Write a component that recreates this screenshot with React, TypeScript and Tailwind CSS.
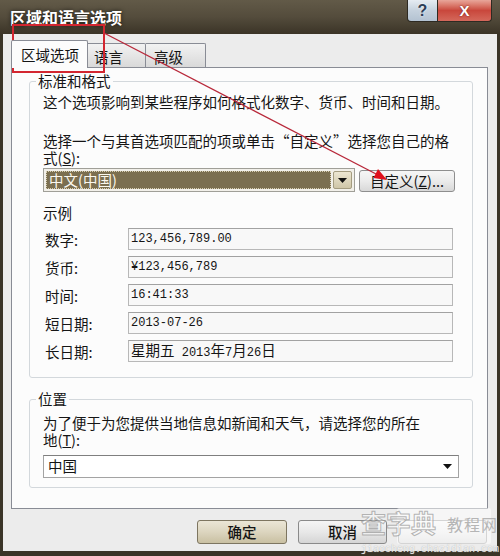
import React from "react";

const cjk = "[font-family:'Noto_Sans_CJK_SC',sans-serif]";
const mono = "[font-family:'Liberation_Mono',monospace]";

function Row({ label, children }: { label: string; children: React.ReactNode }) {
  return (
    <div className="flex items-center h-[22px]">
      <div className="w-[85px] pl-[2px] whitespace-nowrap leading-[17px]">{label}</div>
      <div className="h-[22px] w-[325px] border border-[#b8b8b8] border-t-[#a2a2a2] bg-[#f8f8f8] pl-[2px] flex items-center">
        <span className="[font-family:'Liberation_Mono',monospace] text-[12px] leading-none whitespace-nowrap">{children}</span>
      </div>
    </div>
  );
}

function DownTri() {
  return (
    <svg width="9" height="5" viewBox="0 0 9 5">
      <path d="M0 0 H9 L4.5 5 Z" fill="#111" />
    </svg>
  );
}

export default function App() {
  return (
    <div className={`relative w-[500px] h-[556px] overflow-hidden bg-[#3a3427] text-[14.5px] text-[#151515] ${cjk}`}>
      {/* Title bar */}
      <div className="h-[34px] flex justify-between items-start bg-linear-to-b from-[#625a48] via-[#544c3c] to-[#3b3427] pl-[10px] pr-[8px]">
        <div className="mt-[7px] text-white font-bold text-[16px] leading-[20px] [text-shadow:0_0_4px_rgba(0,0,0,0.7)]">
          区域和语言选项
        </div>
        <div className="flex">
          <div className="w-[31px] h-[22px] rounded-bl-[4px] border border-t-0 border-[#2e2a22] bg-linear-to-b from-[#e6ecf2] via-[#c5d1dd] to-[#b3c2d1] flex items-center justify-center">
            <span className="text-[16px] font-bold text-[#2d3e57] leading-none [font-family:'Liberation_Sans',sans-serif] [text-shadow:0_0_2px_#fff]">?</span>
          </div>
          <div className="w-[54px] h-[22px] rounded-br-[4px] border border-l-0 border-t-0 border-[#2e2a22] bg-linear-to-b from-[#e8a69a] via-[#c9473c] to-[#d4685b] flex items-center justify-center">
            <span className="text-[15px] font-bold text-white leading-none [font-family:'Liberation_Sans',sans-serif] [text-shadow:0_0_2px_#6a1a12]">X</span>
          </div>
        </div>
      </div>

      {/* Body */}
      <div className="mx-[3px] h-[517px] bg-[#ececec] pt-[6px] pl-[8px] pr-[9px] flex flex-col">
        {/* Tabs */}
        <div className="flex items-end h-[27px]">
          <div className="relative z-10 -mb-px w-[77px] h-[28px] bg-[#fcfcfc] border border-b-0 border-[#898c95] rounded-t-[2px] pl-[9px] flex items-center whitespace-nowrap">
            区域选项
          </div>
          <div className="w-[58px] h-[24px] bg-linear-to-b from-[#f2f2f2] to-[#d9d9d9] border border-l-0 border-b-0 border-[#898c95] rounded-tr-[2px] pl-[6px] pt-[2px] flex items-center whitespace-nowrap">
            语言
          </div>
          <div className="w-[60px] h-[24px] bg-linear-to-b from-[#f2f2f2] to-[#d9d9d9] border border-l-0 border-b-0 border-[#898c95] rounded-tr-[2px] pl-[8px] pt-[2px] flex items-center whitespace-nowrap">
            高级
          </div>
        </div>

        {/* Panel */}
        <div className="h-[442px] border border-[#898c95] bg-[#fcfcfc] pt-[4px] pl-[17px] pr-[14px] flex flex-col">
          {/* Group 1 */}
          <fieldset className="border border-[#d3d8dc] rounded-[3px] pl-[13px] pr-[13px] pb-[15px] min-w-0">
            <legend className="-ml-[7px] px-[2px] leading-[18px]">标准和格式</legend>
            <div className="mt-[3px] leading-[17px] whitespace-nowrap">
              这个选项影响到某些程序如何格式化数字、货币、时间和日期。
            </div>
            <div className="mt-[22px] flex flex-col">
              <div className="h-[17px] leading-[17px] whitespace-nowrap">选择一个与其首选项匹配的项或单击“自定义”选择您自己的格</div>
              <div className="h-[17px] leading-[17px] whitespace-nowrap flex">
                <span>式(</span>
                <span className="underline">S</span>
                <span>):</span>
              </div>
            </div>
            <div className="mt-[2px] flex items-end">
              <div className="w-[312px] h-[24px] border border-[#a09f98] bg-[#f2f0ea] p-[2px] flex">
                <div className="flex-1 bg-[#7b6f50] border border-dotted border-[#d8d0b4] text-[#fbf8ee] flex items-center pl-[2px] leading-none whitespace-nowrap">
                  中文(中国)
                </div>
                <div className="w-[19px] ml-[2px] border border-[#a49c80] rounded-[2px] bg-linear-to-b from-[#ece6d2] to-[#cfc6a8] flex items-center justify-center">
                  <DownTri />
                </div>
              </div>
              <div className="ml-[4px] w-[96px] h-[22px] border border-[#8e8e8e] rounded-[3px] bg-linear-to-b from-[#f6f6f6] via-[#ebebeb] to-[#d8d8d8] flex items-center justify-center whitespace-nowrap leading-none">
                自定义(<span className="underline">Z</span>)...
              </div>
            </div>
            <div className="mt-[12px] leading-[17px]">示例</div>
            <div className="mt-[7px] flex flex-col gap-[6px]">
              <Row label="数字:">123,456,789.00</Row>
              <Row label="货币:">¥123,456,789</Row>
              <Row label="时间:">16:41:33</Row>
              <Row label="短日期:">2013-07-26</Row>
              <Row label="长日期:">
                <span className={`${cjk} text-[14.5px]`}>星期五</span> 2013
                <span className={`${cjk} text-[14.5px]`}>年</span>7
                <span className={`${cjk} text-[14.5px]`}>月</span>26
                <span className={`${cjk} text-[14.5px]`}>日</span>
              </Row>
            </div>
          </fieldset>

          {/* Group 2 */}
          <fieldset className="mt-[12px] border border-[#d3d8dc] rounded-[3px] pl-[13px] pr-[13px] pb-[9px] min-w-0">
            <legend className="-ml-[7px] px-[2px] leading-[18px]">位置</legend>
            <div className="mt-[6px] flex flex-col">
              <div className="h-[17px] leading-[17px] whitespace-nowrap">为了便于为您提供当地信息如新闻和天气，请选择您的所在</div>
              <div className="h-[17px] leading-[17px] whitespace-nowrap flex">
                <span>地(</span>
                <span className="underline">T</span>
                <span>):</span>
              </div>
            </div>
            <div className="mt-[7px] w-[416px] h-[23px] border border-[#a3a3a3] border-t-[#7f7f7f] bg-white flex items-center justify-between pl-[4px] pr-[6px]">
              <span className="leading-none">中国</span>
              <DownTri />
            </div>
          </fieldset>
        </div>

        {/* Buttons */}
        <div className="mt-[11px] flex justify-end gap-[11px] pr-[1px]">
          <div className="w-[90px] h-[24px] border border-[#7d7560] rounded-[3px] bg-linear-to-b from-[#ebe6d6] via-[#dcd5bf] to-[#c9c0a2] flex items-center justify-center leading-none font-medium">
            确定
          </div>
          <div className="w-[89px] h-[24px] border border-[#8a8a8a] rounded-[3px] bg-linear-to-b from-[#f5f5f5] via-[#e8e8e8] to-[#d5d5d5] flex items-center justify-center leading-none font-medium">
            取消
          </div>
          <div className="w-[89px] h-[24px] border border-[#a8a8a8] rounded-[3px] bg-linear-to-b from-[#f5f5f5] via-[#ececec] to-[#dcdcdc]" />
        </div>
      </div>

      {/* Red annotation overlay */}
      <svg className="absolute left-0 top-0 pointer-events-none" width="500" height="556" viewBox="0 0 500 556">
        <rect x="13" y="25" width="91" height="47" fill="none" stroke="#d32630" strokeWidth="2" />
        <line x1="104" y1="33" x2="378" y2="175" stroke="#b8283a" strokeWidth="1.3" />
        <polygon points="387,180 373.5,178 378,169" fill="#e0101c" />
      </svg>

      {/* Watermark overlay */}
      <div className="absolute left-[361px] top-[506px] w-[139px] h-[50px] pointer-events-none">
        <div className="absolute left-[36px] top-[2px] w-[94px] h-[36px] bg-white/50 rounded-[2px]" />
        <div className="absolute left-0 top-[4px] text-[25px] leading-none font-bold text-white/40 [-webkit-text-stroke:1px_rgba(150,150,150,0.7)]">
          查字典
        </div>
        <div className="absolute left-[86px] top-[10px] text-[16px] leading-none text-[#b5b5b5] tracking-[1px]">
          教程网
        </div>
        <div className={`absolute left-0 top-[39px] text-[10px] leading-none text-white/85 ${mono} [text-shadow:0_0_1px_#999]`}>
          jiaocheng.chazidian.com
        </div>
      </div>
    </div>
  );
}
